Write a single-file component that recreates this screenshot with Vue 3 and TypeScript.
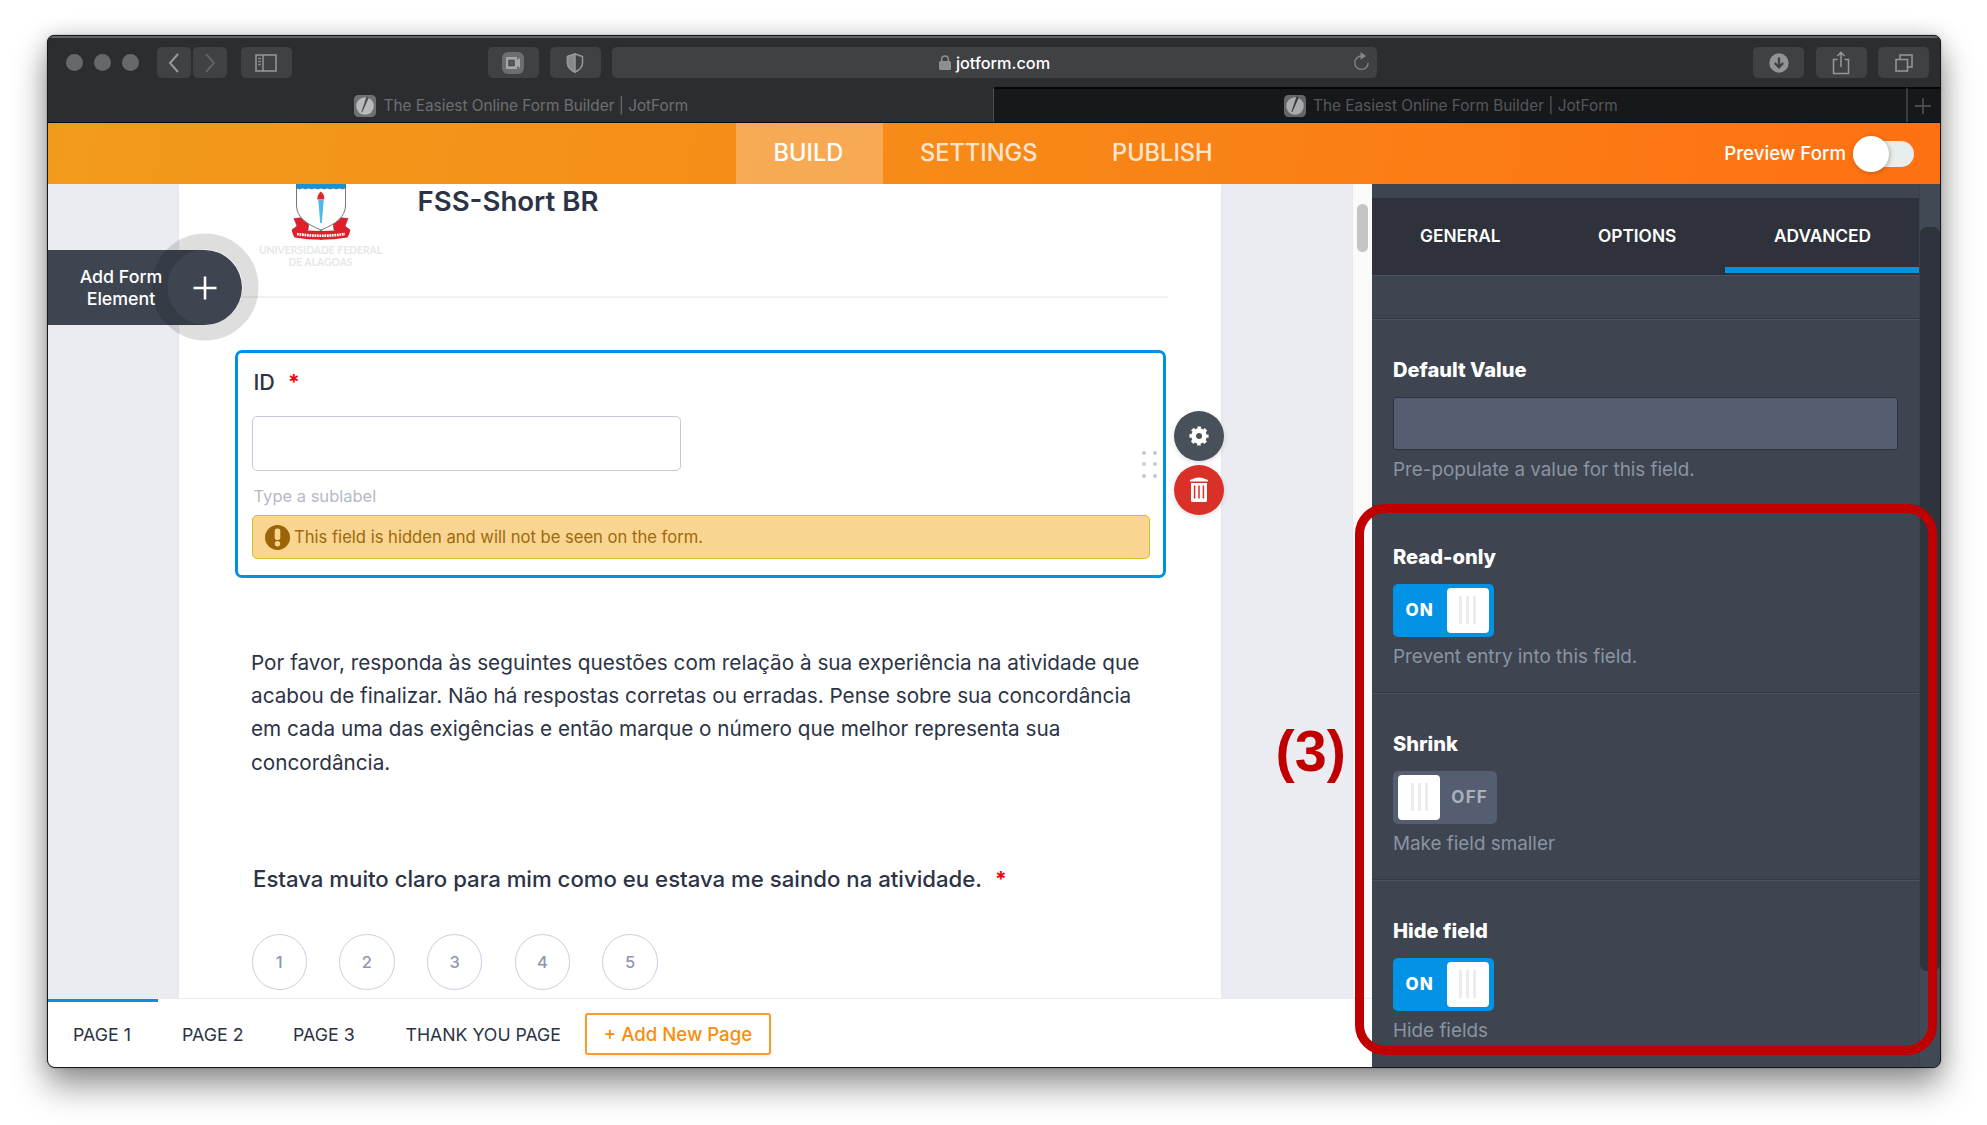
<script setup lang="ts">
interface Setting { title: string; kind: 'input' | 'on' | 'off'; help: string }

const menu: string[] = ['BUILD', 'SETTINGS', 'PUBLISH']
const panelTabs: string[] = ['GENERAL', 'OPTIONS', 'ADVANCED']
const settings: Setting[] = [
  { title: 'Default Value', kind: 'input', help: 'Pre-populate a value for this field.' },
  { title: 'Read-only', kind: 'on', help: 'Prevent entry into this field.' },
  { title: 'Shrink', kind: 'off', help: 'Make field smaller' },
  { title: 'Hide field', kind: 'on', help: 'Hide fields' },
]
const paragraph: string[] = [
  'Por favor, responda às seguintes questões com relação à sua experiência na atividade que',
  'acabou de finalizar. Não há respostas corretas ou erradas. Pense sobre sua concordância',
  'em cada uma das exigências e então marque o número que melhor representa sua',
  'concordância.',
]
const pages: string[] = ['PAGE 1', 'PAGE 2', 'PAGE 3', 'THANK YOU PAGE']
</script>

<template>
  <main class="stage">
    <div class="window">
      <header class="toolbar">
        <div class="lights"><i></i><i></i><i></i></div>
        <div class="nav">
          <span class="tbtn small"><svg width="12" height="20" viewBox="0 0 12 20"><path d="M10 1 2 10l8 9" /></svg></span>
          <span class="tbtn small dim"><svg width="12" height="20" viewBox="0 0 12 20"><path d="m2 1 8 9-8 9" /></svg></span>
        </div>
        <span class="tbtn side"><svg width="22" height="18" viewBox="0 0 22 18"><path d="M1 1h20v16H1zM8 1v16M3.300 4.500h2.400M3.300 7.500h2.400M3.300 10.500h2.400" /></svg></span>
        <span class="tbtn cam"><svg width="24" height="24" viewBox="0 0 24 24"><rect x="1" y="1" width="22" height="22" rx="6" fill="#6d6e70" stroke="none" /><path d="M5 6h11v3l3-2v10l-3-2v3H5z" fill="#a5a6a7" stroke="none" /><path d="M8 9.500h5v5H8z" fill="#5b5c5e" stroke="#4c4d4f" /></svg></span>
        <span class="tbtn shield"><svg width="18" height="20" viewBox="0 0 18 20"><path d="M9 1 16.500 3.500V10c0 4-3 7-7.500 9C4.500 17 1.500 14 1.500 10V3.500z" /><path d="M9 1v18C4.500 17 1.500 14 1.500 10V3.500z" fill="#88898b" /></svg></span>
        <div class="address">
          <svg class="lock" width="12" height="15" viewBox="0 0 12 15"><rect y="6" width="12" height="9" rx="1.500" fill="#8e8f91" /><path d="M2.700 6V4.200a3.300 3.300 0 0 1 6.600 0V6" fill="none" stroke="#8e8f91" stroke-width="1.500" /></svg>
          <span>jotform.com</span>
          <svg class="reload" width="17" height="19" viewBox="0 0 17 19"><path d="M8.500 4A6.700 6.700 0 1 0 15.200 10.700" fill="none" stroke="#85868a" stroke-width="1.300" /><path d="M7.500 0 13 4 7.500 7.800z" fill="#85868a" /></svg>
        </div>
        <div class="actions">
          <span class="tbtn"><svg width="20" height="20" viewBox="0 0 20 20"><circle cx="10" cy="10" r="9.700" fill="#929395" stroke="none" /><path d="M10 4.500v9M5.800 10 10 14.300 14.200 10" stroke="#3f4042" stroke-width="2.300" /></svg></span>
          <span class="tbtn"><svg width="18" height="24" viewBox="0 0 18 24"><path d="M5.500 8.500H1.500v14h15v-14h-4M9 16V1.500M5.500 5 9 1.300 12.500 5" /></svg></span>
          <span class="tbtn"><svg width="18" height="18" viewBox="0 0 18 18"><path d="M1 5.500h11.500V17H1zM5 5.500V1h12v12h-4.500" /></svg></span>
        </div>
      </header>
      <nav class="tabs">
        <div class="tab active">
          <svg width="22" height="22" viewBox="0 0 22 22"><rect width="22" height="22" rx="4.500" fill="#707173" /><circle cx="11" cy="11" r="8.800" fill="#b9babb" /><path d="M12.500 1.500 7.200 17.500l1.300-.8L14.800 2.500z" fill="#4c4d50" /></svg>
          <span>The Easiest Online Form Builder | JotForm</span>
        </div>
        <div class="tab">
          <svg width="22" height="22" viewBox="0 0 22 22"><rect width="22" height="22" rx="4.500" fill="#656668" /><circle cx="11" cy="11" r="8.800" fill="#aaabac" /><path d="M12.500 1.500 7.200 17.500l1.300-.8L14.800 2.500z" fill="#3a3b3d" /></svg>
          <span>The Easiest Online Form Builder | JotForm</span>
        </div>
        <div class="plus"><svg width="16" height="16" viewBox="0 0 16 16"><path d="M8 0v16M0 8h16" stroke="#58595b" stroke-width="1.400" /></svg></div>
      </nav>
      <section class="orange">
        <span v-for="(m, i) in menu" :key="m" class="menu" :class="['menu' + i]">{{ m }}</span>
        <div class="preview"><span>Preview Form</span><div class="switch"><i></i></div></div>
      </section>

      <div class="content">
        <div class="left">
          <div class="canvas">
            <div class="gutter">
              <div class="adder">
                <svg class="ring" width="110" height="110" viewBox="0 0 110 110"><circle cx="55" cy="55" r="45.500" fill="none" stroke="#000" stroke-opacity=".13" stroke-width="16" /></svg>
                <span class="addtext">Add Form<br />Element</span>
                <svg class="addplus" width="24" height="24" viewBox="0 0 24 24"><path d="M12 .5v23M.5 12h23" stroke="#fff" stroke-width="2.600" /></svg>
              </div>
            </div>
            <article class="form">
              <div class="head">
                <div class="logo">
                  <svg width="60" height="56" viewBox="0 0 60 56">
                    <path d="M12 45v9M30 46v10M48 45v9" stroke="#2a9bd5" stroke-width="2.500" />
                    <path d="M3 34.500l10-1 5 3.500-1 9-13 6-3-6 5-4zM57 34.500l-10-1-5 3.500 1 9 13 6 3-6-5-4z" fill="#e01f2b" stroke="#8c2630" stroke-width=".6" />
                    <path d="M5.500-2V22C6 33 15 40 30 46 45 40 54 33 54.500 22V-2z" fill="#fff" stroke="#777" stroke-width="1" />
                    <path d="M5.500-2V4q3 2 6.100 0 3 2 6.100 0 3 2 6.100 0 3 2 6.200 0 3 2 6.100 0 3 2 6.100 0 3 2 6.100 0 3 2 6.200 0V-2z" fill="#1493d8" stroke="#456f88" stroke-width=".6" />
                    <path d="M27.300 16h5.400L30.800 39h-1.600z" fill="#4eb8ec" />
                    <path d="M29.800 7.500c3.200 3 3.700 4.500 3.400 8h-6.800c-.3-3 .5-5 3.400-8z" fill="#df2630" />
                    <path d="M2 44.500Q30 49.500 58 44.500q2 4-1.500 9Q30 58 3.500 53.500 0 48.500 2 44.500z" fill="#e01f2b" />
                    <path d="M6 50q24 3.500 48 0" fill="none" stroke="#fff" stroke-width="2.700" stroke-dasharray="1.800 .7" />
                  </svg>
                  <span>UNIVERSIDADE FEDERAL<br />DE ALAGOAS</span>
                </div>
                <h1>FSS-Short BR</h1>
              </div>
              <div class="card">
                <div class="label"><span>ID</span><b class="star">*</b></div>
                <div class="field"></div>
                <div class="sub">Type a sublabel</div>
                <div class="banner">
                  <svg width="25" height="25" viewBox="0 0 25 25"><circle cx="12.500" cy="12.500" r="12.500" fill="#9c6406" /><rect x="9.700" y="3.500" width="5.600" height="11.500" rx="2.500" fill="#fad591" /><circle cx="12.500" cy="18.800" r="2.700" fill="#fad591" /></svg>
                  <span>This field is hidden and will not be seen on the form.</span>
                </div>
                <div class="dots"><i v-for="n in 6" :key="n"></i></div>
                <div class="round gear"><svg width="20" height="20" viewBox="0 0 20 20"><circle cx="10" cy="10" r="5.400" fill="none" stroke="#fff" stroke-width="4.800" /><circle cx="10" cy="10" r="8" fill="none" stroke="#fff" stroke-width="3.200" stroke-dasharray="3.400 2.883" stroke-dashoffset="1.700" /></svg></div>
                <div class="round trash"><svg width="18" height="25" viewBox="0 0 18 25"><path d="M0 4.500V3l4-1.500Q9-.5 14 1.500L18 3v1.500zM1 6h16v17.500q0 1.500-1.500 1.500h-13Q1 25 1 23.500z" fill="#fff" /><path d="M4.600 8.500v13M9 8.500v13M13.400 8.500v13" stroke="#d93128" stroke-width="1.500" /></svg></div>
              </div>
              <div class="para"><p v-for="line in paragraph" :key="line">{{ line }}</p></div>
              <div class="question"><span>Estava muito claro para mim como eu estava me saindo na atividade.</span><b class="star">*</b></div>
              <div class="scale"><span v-for="n in 5" :key="n">{{ n }}</span></div>
            </article>
            <div class="gutter right"></div>
            <div class="scroll"><i></i></div>
          </div>
          <footer class="pages">
            <span v-for="(p, i) in pages" :key="p" :class="['page', 'page' + i]">{{ p }}</span>
            <button type="button">+ Add New Page</button>
          </footer>
        </div>
        <aside class="panel">
          <div class="inner">
            <div class="ptabs"><span v-for="(t, i) in panelTabs" :key="t" :class="'pt' + i">{{ t }}</span></div>
            <div class="spacer"></div>
            <div v-for="s in settings" :key="s.title" class="setting">
              <h2>{{ s.title }}</h2>
              <div v-if="s.kind === 'input'" class="value"></div>
              <div v-else class="toggle" :class="s.kind"><span>{{ s.kind === 'on' ? 'ON' : 'OFF' }}</span><div class="knob"><i></i><i></i><i></i></div></div>
              <p>{{ s.help }}</p>
            </div>
          </div>
          <div class="track"><i></i></div>
        </aside>
      </div>
    </div>
    <div class="callout"></div>
    <strong class="mark">(3)</strong>
  </main>
</template>

<style>
body { margin: 0; background: #fff; overflow: hidden; }
</style>

<style scoped>
* { box-sizing: border-box; }
.stage { position: relative; width: 1987px; height: 1125px; padding: 35px 0 0 47px; overflow: hidden; background: #fff; font-family: Inter, "Noto Sans", sans-serif; }
.window { width: 1894px; height: 1033px; display: flex; flex-direction: column; overflow: hidden; border: 1px solid #15181a; border-radius: 7px 7px 8px 8px; background: #2c2d31; box-shadow: 0 0 2px rgba(0, 0, 0, .3), 0 18px 34px rgba(0, 0, 0, .42), 0 0 22px rgba(0, 0, 0, .14); }
svg { display: block; flex: none; }
.toolbar { height: 51px; flex: none; display: flex; align-items: center; border-top: 2px solid #626566; background: #2c2d31; }
.lights { display: flex; gap: 11px; margin-left: 18px; }
.lights i { width: 17px; height: 17px; border-radius: 50%; background: #67686a; }
.tbtn { width: 51px; height: 31px; display: flex; align-items: center; justify-content: center; border-radius: 5px; background: #404144; }
.tbtn svg { fill: none; stroke: #97989a; stroke-width: 1.500; }
.nav { display: flex; gap: 2px; margin-left: 17.500px; }
.tbtn.small { width: 34px; }
.tbtn.small svg { stroke-width: 2; }
.tbtn.dim svg { stroke: #606164; }
.side { margin-left: 14px; }
.cam { margin-left: 196px; }
.shield { margin-left: 11px; }
.address { position: relative; width: 765px; height: 31px; margin-left: 11.500px; display: flex; align-items: center; justify-content: center; gap: 5px; border-radius: 5px; background: #404144; color: #fff; font-size: 16.300px; font-weight: 500; }
.reload { position: absolute; right: 7px; top: 5px; }
.actions { display: flex; gap: 11.500px; margin-left: 376px; }
.tabs { height: 36px; flex: none; display: flex; border-bottom: 1px solid #08090a; background: #17181b; }
.tab { flex: none; display: flex; align-items: center; gap: 7.500px; font-size: 15.350px; color: #56575a; border-top: 2px solid #060607; width: 912px; padding-left: 289.500px; white-space: nowrap; }
.tab.active { width: 946px; padding-left: 306px; background: #2c2d31; color: #6e6f72; border-top-color: #2c2d31; border-right: 1px solid #4c4d50; }
.plus { flex: 1; display: flex; align-items: center; justify-content: center; border-left: 2px solid #3c3d40; border-top: 2px solid #060607; padding-right: 2px; }
.orange { height: 61px; flex: none; display: flex; align-items: center; background: linear-gradient(100deg, #f29b1a 0%, #f68c18 42%, #ff7012 100%); color: #ffe5cd; }
.menu { font-size: 23.600px; line-height: 60px; height: 61px; font-weight: 500; padding-left: 37px; }
.menu0 { margin-left: 688px; width: 147px; padding-left: 37.500px; background: rgba(255, 255, 255, .26); color: #fff; }
.menu1 { width: 192px; }
.menu2 { width: 180px; }
.preview { margin-left: auto; display: flex; align-items: center; gap: 7px; margin-right: 26px; color: #fff; font-size: 18.700px; font-weight: 500; }
.switch { position: relative; width: 61px; height: 26px; border-radius: 13px; background: #e8eded; }
.switch i { position: absolute; left: 0; top: -5px; width: 36px; height: 36px; border-radius: 50%; background: #fff; box-shadow: 1px 1px 4px rgba(80, 50, 20, .35); }
.content { flex: 1; display: flex; min-height: 0; }
.left { width: 1324px; flex: none; display: flex; flex-direction: column; background: #fff; }
.canvas { height: 814px; flex: none; display: flex; overflow: hidden; background: #ebecf2; }
.gutter { position: relative; width: 131px; flex: none; }
.gutter.right { flex: 1; }
.adder { position: absolute; z-index: 3; left: 0; top: 66px; width: 194px; height: 75px; border-radius: 0 38px 38px 0; background: #3e4550; color: #fff; display: flex; align-items: center; }
.ring { position: absolute; left: 102px; top: -18px; }
.addtext { position: relative; width: 84px; margin-left: 31px; padding-top: 1px; text-align: center; font-size: 17.800px; line-height: 22px; font-weight: 500; white-space: nowrap; }
.addplus { position: relative; margin-left: 30px; }
.form { width: 1042px; flex: none; background: #fff; box-shadow: 0 0 2px #dfe1e8; padding: 0 53px 0 56px; color: #2c3345; }
.head { height: 114px; display: flex; width: 933px; border-bottom: 2px solid #f0f0f5; }
.logo { width: 125px; margin-left: 23px; display: flex; flex-direction: column; align-items: center; }
.logo span { margin-top: 5px; text-align: center; font: 700 10.350px/11.500px Lato, sans-serif; color: #e5e8e8; white-space: nowrap; }
h1 { margin: 0 0 0 34.500px; font-size: 27.600px; line-height: 35px; font-weight: 600; }
.card { position: relative; width: 931px; height: 228px; margin-top: 52px; border: 3px solid #0090e6; border-radius: 7px; padding: 14px 14px 0; display: flex; flex-direction: column; }
.label { display: flex; height: 30px; line-height: 30px; padding-left: 1.500px; font-size: 21.500px; font-weight: 500; }
.star { color: #f5000a; font-weight: 700; font-size: 21px; }
.label .star { margin-left: 13px; padding-top: 1px; }
.field { width: 429px; height: 55px; flex: none; margin-top: 18.500px; border: 1.500px solid #c3cadb; border-radius: 5px; }
.sub { height: 20px; line-height: 20px; margin-top: 15.500px; padding-left: 1.500px; color: #b4b9c9; font-size: 16.500px; }
.banner { height: 44px; width: 898px; margin-top: 9px; display: flex; align-items: center; gap: 4px; padding-left: 12px; border: 1.500px solid #dabb28; border-radius: 5px; background: #fad591; color: #9c6a0c; font-size: 16.600px; line-height: 20px; }
.banner span { padding-bottom: 1px; }
.dots { position: absolute; left: 904px; top: 98px; display: grid; grid-template-columns: 4px 4px; gap: 7.300px 6.500px; }
.dots i { width: 4px; height: 4px; border-radius: 50%; background: #c4c9da; }
.round { position: absolute; left: 936px; width: 50px; height: 50px; border-radius: 50%; display: flex; align-items: center; justify-content: center; box-shadow: 0 2px 5px rgba(0, 0, 0, .12); }
.round svg { margin: -1px 1px 0 0; }
.gear { top: 58px; background: #48505a; }
.trash { top: 112px; background: #d93128; }
.para { margin: 68px 0 0 16px; font-size: 20.720px; line-height: 33.200px; white-space: nowrap; }
.para p { margin: 0; }
.question { display: flex; height: 30px; line-height: 30px; margin: 85.200px 0 0 18px; font-size: 22.200px; font-weight: 500; white-space: nowrap; }
.question .star { margin-left: 13px; padding-top: 1px; }
.scale { display: flex; gap: 32.200px; margin: 40px 0 0 16.500px; }
.scale span { width: 55.500px; height: 55.500px; border: 1.500px solid #c9cee0; border-radius: 50%; display: flex; align-items: center; justify-content: center; color: #8d97b3; font-size: 16.500px; font-weight: 500; }
.scroll { width: 20px; padding: 20px 0 0 4px; background: #fafafa; border-left: 1px solid #e8e8ec; }
.scroll i { display: block; width: 11px; height: 48px; border-radius: 6px; background: #c5c5c5; }
.pages { flex: 1; display: flex; color: #2c3345; font-size: 17.800px; line-height: 71px; border-top: 1px solid #ebecf0; white-space: nowrap; }
.page0 { width: 110px; padding-left: 25px; border-top: 3px solid #0090e6; line-height: 65px; }
.page1 { width: 111px; padding-left: 24px; }
.page2 { width: 113px; padding-left: 24px; }
.page3 { width: 203px; padding-left: 23.500px; font-size: 17.700px; }
.pages button { width: 186px; height: 42px; margin: 14px 0 0; padding: 0; border: 2px solid #f99c2c; border-radius: 3px; background: #fff; color: #fb8d0a; font: 500 18.600px/37px Inter, sans-serif; box-shadow: 0 2px 4px rgba(0, 0, 0, .06); }
.panel { flex: 1; display: flex; background: #3e4550; color: #fff; }
.inner { width: 547px; flex: none; padding-top: 14px; }
.ptabs { height: 77px; display: flex; background: #2f323a; font-size: 17.300px; font-weight: 600; line-height: 76px; }
.pt0 { width: 178px; padding-left: 48px; }
.pt1 { width: 175px; padding-left: 48px; }
.pt2 { width: 194px; height: 75px; padding-left: 49px; border-bottom: 6px solid #0293e6; }
.spacer { height: 43px; border-top: 1px solid #4b5464; }
.setting { height: 187px; padding: 37px 21px 0; border-top: 1px solid #353b45; box-shadow: inset 0 1px #4b5464; }
h2 { margin: 0; height: 28px; font-size: 20.100px; line-height: 28px; font-weight: 800; }
.value { width: 505px; height: 53px; margin-top: 13px; border: 1px solid #2e323a; border-radius: 3px; background: #545e70; }
.toggle { width: 101px; height: 53px; margin-top: 12.500px; display: flex; align-items: center; border-radius: 5px; background: #0293e6; font-size: 17px; font-weight: 800; padding: 0 5.500px 0 12.500px; justify-content: space-between; letter-spacing: 1.200px; }
.toggle.off { width: 104px; flex-direction: row-reverse; padding: 0 9px 0 5px; background: #545e70; color: #a9b1be; font-weight: 700; }
.knob { width: 42px; height: 45px; border-radius: 4px; background: #fff; display: flex; align-items: center; justify-content: center; gap: 4px; }
.knob i { width: 3px; height: 28px; background: #ececec; }
.setting p { margin: 8px 0 0; height: 24px; line-height: 24px; font-size: 18.850px; color: #8a94a3; }
.track { flex: 1; border-left: 1px solid #3a414c; padding-top: 43px; background: #414955; }
.track i { display: block; height: 744px; border-radius: 7px; background: #2f333b; }
.callout { position: absolute; left: 1355px; top: 504px; width: 582px; height: 551px; border: 9px solid #c00000; border-radius: 30px; }
.mark { position: absolute; left: 1275.500px; top: 718px; color: #c00000; font: 700 57.500px/66px "Liberation Sans", Arial, sans-serif; }
</style>
